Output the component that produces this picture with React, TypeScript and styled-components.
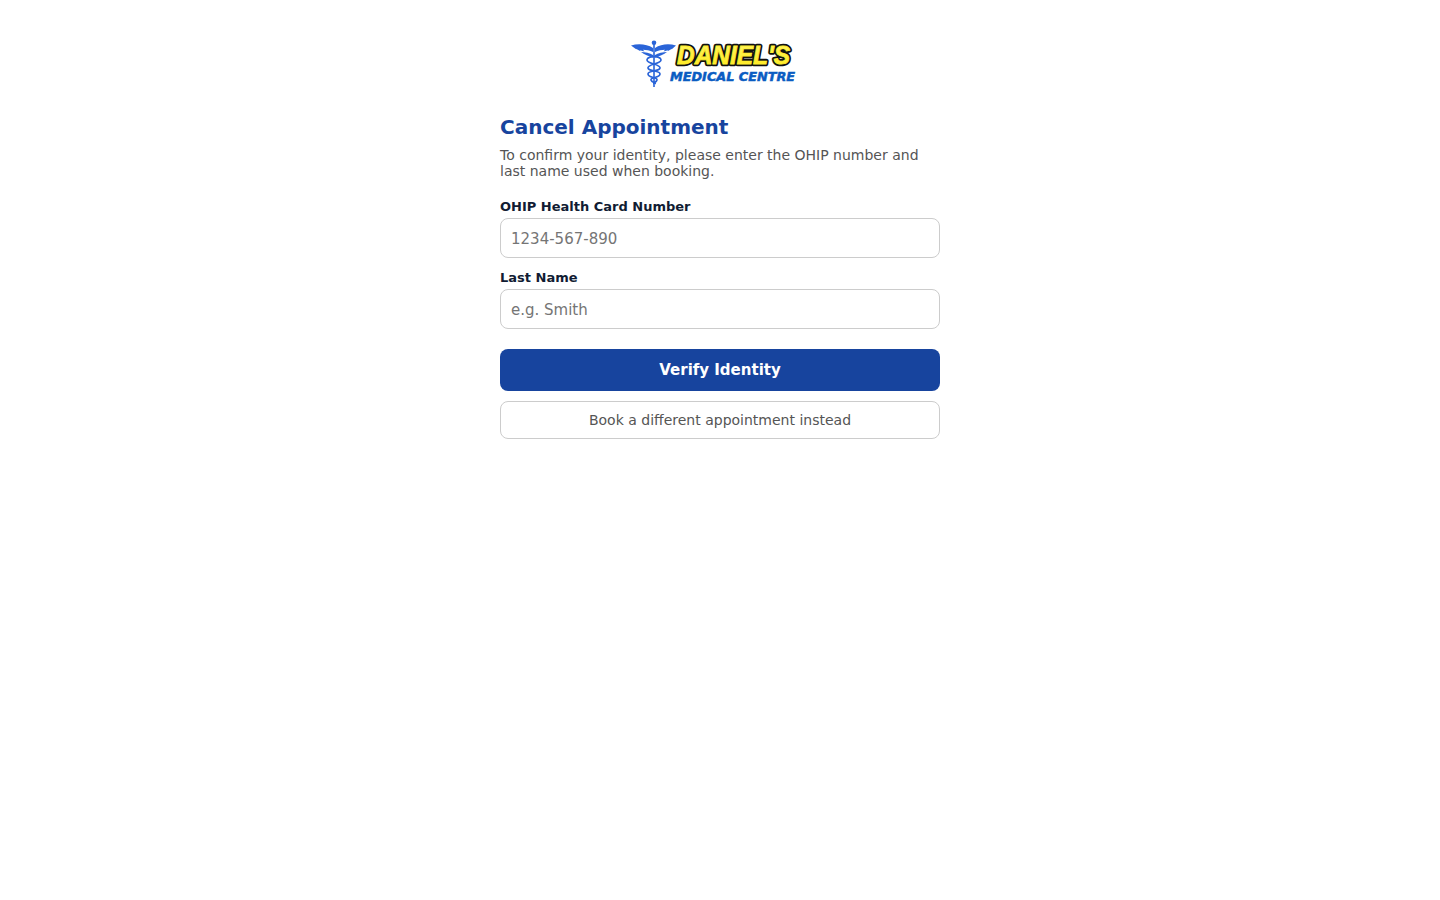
import styled, { createGlobalStyle } from "styled-components";

const GlobalStyle = createGlobalStyle`
  body {
    margin: 0;
    background-color: #ffffff;
    font-family: "DejaVu Sans", Verdana, sans-serif;
  }
`;

const Page = styled.main`
  width: 440px;
  margin: 0 auto;
  padding-top: 40px;
`;

const LogoWrap = styled.div`
  display: flex;
  justify-content: center;
  height: 48px;
  margin-bottom: 24px;
`;

const Heading = styled.h1`
  margin: 0 0 5px;
  font-size: 20px;
  line-height: 30px;
  font-weight: 700;
  color: #17449e;
`;

const Intro = styled.p`
  margin: 0 0 20px;
  font-size: 14px;
  line-height: 16px;
  color: #555555;
`;

const Form = styled.form`
  display: flex;
  flex-direction: column;
`;

const Field = styled.label`
  display: block;
  margin-bottom: 12px;
`;

const FieldLabel = styled.span`
  display: block;
  margin-bottom: 3px;
  font-size: 13px;
  line-height: 16px;
  font-weight: 700;
  color: #111c33;
`;

const Input = styled.input`
  display: block;
  box-sizing: border-box;
  width: 100%;
  height: 40px;
  padding: 1px 10px 0;
  border: 1px solid #cccccc;
  border-radius: 8px;
  background: #ffffff;
  font-family: inherit;
  font-size: 15px;
  color: #111827;
  outline: none;

  &::placeholder {
    color: #757575;
    opacity: 1;
  }
`;

const PrimaryButton = styled.button`
  height: 42px;
  margin-top: 8px;
  border: none;
  border-radius: 8px;
  background-color: #17449e;
  color: #ffffff;
  font-family: inherit;
  font-size: 15px;
  font-weight: 700;
  cursor: pointer;
`;

const SecondaryButton = styled.button`
  height: 38px;
  margin-top: 10px;
  border: 1px solid #cccccc;
  border-radius: 8px;
  background-color: #ffffff;
  color: #555555;
  font-family: inherit;
  font-size: 14px;
  cursor: pointer;
`;

const Logo = () => (
  <svg width="180" height="48" viewBox="0 0 180 48" role="img" aria-label="Daniel's Medical Centre">
    <defs>
      <linearGradient id="danielFill" x1="0" y1="0" x2="0" y2="1">
        <stop offset="0" stopColor="#fff76a" />
        <stop offset="1" stopColor="#ffe91c" />
      </linearGradient>
    </defs>
    {/* wings */}
    <g fill="#2a64d8">
      <path d="M1 5.5 C8 3.5 17 4 23 8 L23 12 C20 10.5 16 10 13 9.8 L14.5 11.5 L10 10.2 L10.5 11.2 L6 8.8 L6.5 9.6 Z" />
      <path d="M46 5.5 C39 3.5 31 4 25 8 L25 12 C28 10.5 32 10 35 9.8 L33.5 11.5 L38 10.2 L37.5 11.2 L42 8.8 L41.5 9.6 Z" />
      <path d="M11 12 C15 12 20 13 23 15 L23 17.5 C19 16.5 14 14.5 11 12 Z" />
      <path d="M37 12 C33 12 28 13 25 15 L25 17.5 C29 16.5 34 14.5 37 12 Z" />
      <circle cx="24" cy="2.8" r="2.3" />
      <rect x="23.2" y="3" width="1.6" height="44" />
    </g>
    {/* snakes */}
    <g fill="none" stroke="#2a64d8" strokeWidth="1.7">
      <path d="M18 18 C23 15 31 17 31 20 C31 24 17 24 18 28 C19 32 30 30 30 34 C30 38 20 37 21 40 C22 43 26 42 25 44" />
      <path d="M30 18 C25 15 17 17 17 20 C17 24 31 24 30 28 C29 32 18 30 18 34 C18 38 28 37 27 40 C26 43 23 42 24 44" />
    </g>
    {/* wordmark: outline first, fill on top */}
    <g
      fontFamily="'Liberation Sans', Arial, sans-serif"
      fontSize="25"
      fontWeight="700"
      fontStyle="italic"
    >
      <text
        x="47"
        y="23.5"
        fill="#111111"
        stroke="#111111"
        strokeWidth="4.5"
        strokeLinejoin="round"
        textLength="113"
        lengthAdjust="spacingAndGlyphs"
        aria-hidden="true"
      >
        DANIEL'S
      </text>
      <text
        x="47"
        y="23.5"
        fill="url(#danielFill)"
        stroke="#ffef2e"
        strokeWidth="0.8"
        textLength="113"
        lengthAdjust="spacingAndGlyphs"
      >
        DANIEL'S
      </text>
    </g>
    <text
      x="40"
      y="41"
      fontFamily="'DejaVu Sans', sans-serif"
      fontSize="12.5"
      fontWeight="700"
      fontStyle="italic"
      fill="#0a5cc2"
      stroke="#0a5cc2"
      strokeWidth="0.5"
      textLength="125"
      lengthAdjust="spacingAndGlyphs"
    >
      MEDICAL CENTRE
    </text>
  </svg>
);

export default function App() {
  return (
    <>
      <GlobalStyle />
      <Page>
        <LogoWrap>
          <Logo />
        </LogoWrap>
        <Heading>Cancel Appointment</Heading>
        <Intro>
          To confirm your identity, please enter the OHIP number and last name
          used when booking.
        </Intro>
        <Form onSubmit={(e) => e.preventDefault()}>
          <Field>
            <FieldLabel>OHIP Health Card Number</FieldLabel>
            <Input placeholder="1234-567-890" />
          </Field>
          <Field>
            <FieldLabel>Last Name</FieldLabel>
            <Input placeholder="e.g. Smith" />
          </Field>
          <PrimaryButton type="submit">Verify Identity</PrimaryButton>
          <SecondaryButton type="button">
            Book a different appointment instead
          </SecondaryButton>
        </Form>
      </Page>
    </>
  );
}
